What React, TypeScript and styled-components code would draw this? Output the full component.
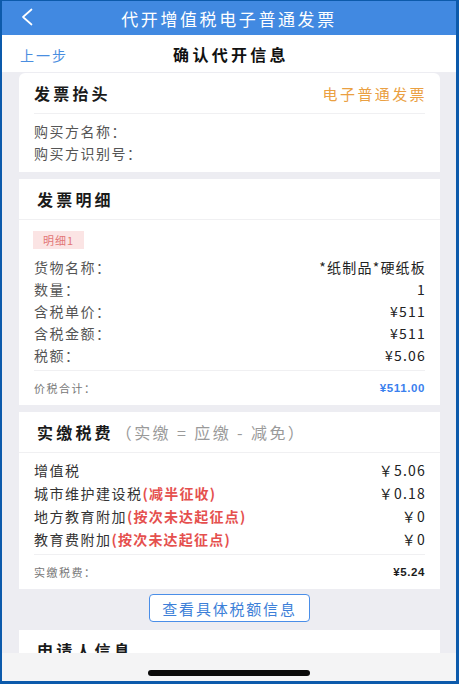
import React from "react";
import styled, { createGlobalStyle } from "styled-components";

const GlobalStyle = createGlobalStyle`
  html, body {
    margin: 0;
    padding: 0;
    background: #0c5aab;
  }
  * {
    box-sizing: border-box;
  }
`;

const detailRows = [
  { label: "货物名称：", value: "*纸制品*硬纸板" },
  { label: "数量：", value: "1" },
  { label: "含税单价：", value: "¥511" },
  { label: "含税金额：", value: "¥511" },
  { label: "税额：", value: "¥5.06" },
];

const taxRows = [
  { label: "增值税", note: "", value: "￥5.06" },
  { label: "城市维护建设税", note: "(减半征收)", value: "￥0.18" },
  { label: "地方教育附加", note: "(按次未达起征点)", value: "￥0" },
  { label: "教育费附加", note: "(按次未达起征点)", value: "￥0" },
];

const App = () => {
  return (
    <Frame>
      <GlobalStyle />
      <NavBar>
        <BackIcon width="14" height="18" viewBox="0 0 14 18">
          <polyline
            points="11.5,1.5 3,9 11.5,16.5"
            fill="none"
            stroke="#fff"
            strokeWidth="1.7"
            strokeLinecap="round"
            strokeLinejoin="round"
          />
        </BackIcon>
        <NavTitle>代开增值税电子普通发票</NavTitle>
      </NavBar>
      <StepBar>
        <StepBack>上一步</StepBack>
        <StepTitle>确认代开信息</StepTitle>
      </StepBar>
      <Content>
        <Card radius="6px">
          <CardHead inset>
            <CardTitle>发票抬头</CardTitle>
            <InvoiceType>电子普通发票</InvoiceType>
          </CardHead>
          <CardBody>
            <RowList top="6px" bottom="8px">
              <Row>
                <Label>购买方名称：</Label>
              </Row>
              <Row>
                <Label>购买方识别号：</Label>
              </Row>
            </RowList>
          </CardBody>
        </Card>

        <Card>
          <CardHead>
            <CardTitle indent>发票明细</CardTitle>
          </CardHead>
          <CardBody>
            <Tag>明细1</Tag>
            <RowList top="6px" bottom="4px">
              {detailRows.map((r) => (
                <Row key={r.label}>
                  <Label>{r.label}</Label>
                  <Value>{r.value}</Value>
                </Row>
              ))}
            </RowList>
            <TotalRow>
              <TotalLabel>价税合计：</TotalLabel>
              <TotalValue color="#3a80ee">¥511.00</TotalValue>
            </TotalRow>
          </CardBody>
        </Card>

        <Card>
          <CardHead start>
            <CardTitle indent>实缴税费</CardTitle>
            <TitleNote>（实缴 = 应缴 - 减免）</TitleNote>
          </CardHead>
          <CardBody>
            <RowList top="5px" bottom="4px" step="23px">
              {taxRows.map((r) => (
                <Row key={r.label}>
                  <Label dark>
                    {r.label}
                    {r.note && <Note>{r.note}</Note>}
                  </Label>
                  <Value>{r.value}</Value>
                </Row>
              ))}
            </RowList>
            <TotalRow>
              <TotalLabel>实缴税费：</TotalLabel>
              <TotalValue color="#1c1c1c">¥5.24</TotalValue>
            </TotalRow>
          </CardBody>
        </Card>

        <ButtonWrap>
          <OutlineButton>查看具体税额信息</OutlineButton>
        </ButtonWrap>

        <Card>
          <CardHead>
            <CardTitle indent>申请人信息</CardTitle>
          </CardHead>
        </Card>
      </Content>
      <HomeBar>
        <HomePill />
      </HomeBar>
    </Frame>
  );
};

const Frame = styled.div`
  width: 459px;
  height: 684px;
  display: flex;
  flex-direction: column;
  overflow: hidden;
  border-style: solid;
  border-color: #0c5aab;
  border-width: 1px 3px 3px 2px;
  font-family: "Noto Sans CJK SC", "Noto Sans", sans-serif;
  background: #ededf2;
`;

const NavBar = styled.div`
  position: relative;
  height: 34px;
  flex-shrink: 0;
  background: #4189e1;
  display: flex;
  align-items: center;
  justify-content: center;
`;

const BackIcon = styled.svg`
  position: absolute;
  left: 18px;
  top: 7px;
`;

const NavTitle = styled.div`
  color: #fff;
  font-size: 17px;
  letter-spacing: 2.6px;
  line-height: 1;
`;

const StepBar = styled.div`
  position: relative;
  height: 37px;
  flex-shrink: 0;
  background: #fff;
  display: flex;
  align-items: center;
  justify-content: center;
`;

const StepBack = styled.div`
  position: absolute;
  left: 18px;
  top: 10px;
  color: #4a8ee0;
  font-size: 14px;
  letter-spacing: 2px;
`;

const StepTitle = styled.div`
  color: #111;
  font-size: 16px;
  font-weight: 700;
  letter-spacing: 3.3px;
  margin-left: 4px;
`;

const Content = styled.div`
  flex: 1;
  overflow: hidden;
  padding: 1px 16px 0 17px;
  display: flex;
  flex-direction: column;
  gap: 7px;
`;

const Card = styled.div<{ radius?: string }>`
  background: #fff;
  border-radius: ${(p) => (p.radius ? `${p.radius} ${p.radius} 0 0` : "0")};
  flex-shrink: 0;
`;

const CardHead = styled.div<{ inset?: boolean; start?: boolean }>`
  height: 41px;
  display: flex;
  align-items: center;
  justify-content: ${(p) => (p.start ? "flex-start" : "space-between")};
  margin: ${(p) => (p.inset ? "0 15px" : "0")};
  padding: ${(p) => (p.inset ? "0" : "0 15px")};
  border-bottom: 1px solid #f0f0f2;
`;

const CardTitle = styled.div<{ indent?: boolean }>`
  color: #1a1a1a;
  font-size: 16px;
  font-weight: 700;
  letter-spacing: 3.2px;
  margin-left: ${(p) => (p.indent ? "3px" : "0")};
`;

const TitleNote = styled.div`
  color: #9a9a9a;
  font-size: 16px;
  letter-spacing: 2.4px;
  margin-left: 2px;
`;

const InvoiceType = styled.div`
  color: #eaa042;
  font-size: 15px;
  letter-spacing: 2.4px;
  margin-right: -2px;
`;

const CardBody = styled.div`
  padding: 0 15px;
`;

const Tag = styled.div`
  display: inline-block;
  margin-top: 11px;
  height: 18px;
  line-height: 18px;
  padding: 0 10px;
  margin-left: -1px;
  background: #fbe4e4;
  color: #e27676;
  font-size: 11px;
  letter-spacing: 1px;
`;

const RowList = styled.div<{ top: string; bottom: string; step?: string }>`
  padding: ${(p) => `${p.top} 0 ${p.bottom}`};
  display: grid;
  grid-auto-rows: ${(p) => p.step || "22px"};
`;

const Row = styled.div`
  display: flex;
  align-items: center;
  justify-content: space-between;
`;

const Label = styled.div<{ dark?: boolean }>`
  color: ${(p) => (p.dark ? "#333" : "#555")};
  font-size: 14px;
  letter-spacing: 1.5px;
  white-space: nowrap;
`;

const Note = styled.span`
  color: #e5504e;
  font-weight: 700;
  letter-spacing: 1.2px;
`;

const Value = styled.div`
  color: #222;
  font-size: 14px;
  letter-spacing: 1.2px;
  margin-right: -1px;
`;

const TotalRow = styled.div`
  height: 35px;
  display: flex;
  align-items: center;
  justify-content: space-between;
  border-top: 1px solid #f0f0f2;
`;

const TotalLabel = styled.div`
  color: #777;
  font-size: 11px;
  letter-spacing: 1.5px;
`;

const TotalValue = styled.div<{ color: string }>`
  color: ${(p) => p.color};
  font-family: "Liberation Sans", Arial, sans-serif;
  font-size: 11.5px;
  font-weight: 700;
  letter-spacing: 0.6px;
`;

const ButtonWrap = styled.div`
  display: flex;
  justify-content: center;
  margin: -2px 0 1px;
  flex-shrink: 0;
`;

const OutlineButton = styled.button`
  width: 161px;
  height: 28px;
  background: #fff;
  border: 1px solid #4a8ee8;
  border-radius: 4px;
  color: #3d7fd8;
  font-family: "Noto Sans CJK SC", sans-serif;
  font-size: 15px;
  letter-spacing: 1.8px;
  padding: 0;
`;

const HomeBar = styled.div`
  height: 28px;
  flex-shrink: 0;
  background: #f4f4f5;
  display: flex;
  justify-content: center;
  padding-top: 17px;
`;

const HomePill = styled.div`
  width: 162px;
  height: 6px;
  border-radius: 3px;
  background: #0a0a0a;
`;

export default App;
